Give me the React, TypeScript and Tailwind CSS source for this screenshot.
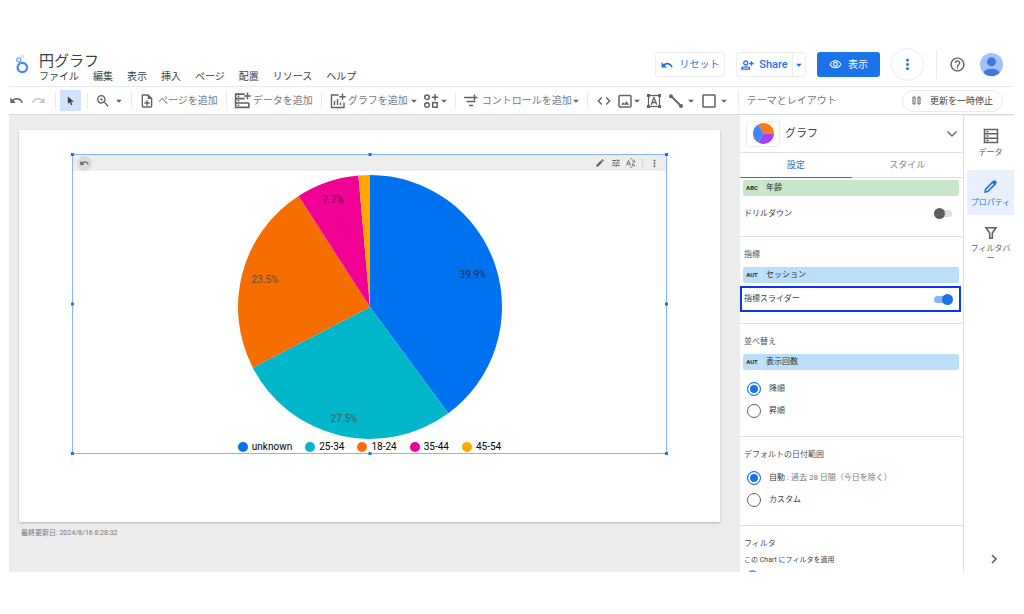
import type { ReactNode } from "react";
import {
  MdArrowDropDown,
  MdCode,
  MdEdit,
  MdHelpOutline,
  MdMoreVert,
  MdOutlineNoteAdd,
  MdOutlineVisibility,
  MdRedo,
  MdTune,
  MdUndo,
  MdZoomIn,
} from "react-icons/md";

const menus = ["ファイル", "編集", "表示", "挿入", "ページ", "配置", "リソース", "ヘルプ"];

const slices = [
  { label: "unknown", value: 39.9, fill: "#0072f0", ink: "#1f2a3c", dot: "bg-[#0072f0]", x: 473, y: 274 },
  { label: "25-34", value: 27.5, fill: "#00b6cb", ink: "#46585e", dot: "bg-[#00b6cb]", x: 344, y: 418 },
  { label: "18-24", value: 23.5, fill: "#f66d00", ink: "#5c4a40", dot: "bg-[#f66d00]", x: 265, y: 279 },
  { label: "35-44", value: 7.7, fill: "#f10096", ink: "#4a1438", dot: "bg-[#f10096]", x: 333, y: 199 },
  { label: "45-54", value: 1.4, fill: "#ffa800", ink: "", dot: "bg-[#ffa800]", x: 0, y: 0 },
];

const CX = 370;
const CY = 307;
const R = 132;

function point(percent: number) {
  const a = (percent / 100) * Math.PI * 2;
  return `${(CX + R * Math.sin(a)).toFixed(2)} ${(CY - R * Math.cos(a)).toFixed(2)}`;
}

function PieChart() {
  let sum = 0;
  return (
    <svg viewBox="236 175 268 265" className="h-[265px] w-[268px]" role="img" aria-label="円グラフ">
      {slices.map((s) => {
        const start = sum;
        sum += s.value;
        return (
          <path
            key={s.label}
            d={`M${CX} ${CY}L${point(start)}A${R} ${R} 0 0 1 ${point(sum)}Z`}
            fill={s.fill}
          />
        );
      })}
      {slices
        .filter((s) => s.ink)
        .map((s) => (
          <text
            key={s.label}
            x={s.x}
            y={s.y + 4}
            textAnchor="middle"
            fill={s.ink}
            className="font-[Roboto] text-[10px]"
          >
            {s.value}%
          </text>
        ))}
    </svg>
  );
}

function Caret({ className = "" }: { className?: string }) {
  return <MdArrowDropDown aria-hidden className={`size-[14px] shrink-0 ${className}`} />;
}

function Sep({ className }: { className: string }) {
  return <span className={`h-[17px] w-px shrink-0 bg-[#e8eaed] ${className}`} />;
}

function Svg({ children, className = "size-4" }: { children: ReactNode; className?: string }) {
  return (
    <svg
      viewBox="0 0 16 16"
      fill="none"
      stroke="currentColor"
      strokeWidth="1.5"
      aria-hidden
      className={`shrink-0 ${className}`}
    >
      {children}
    </svg>
  );
}

function ReplyIcon({ className }: { className: string }) {
  return (
    <svg viewBox="0 0 12 8" aria-hidden className={className}>
      <path d="M0.5 1v5.5H6L3.8 4.4C5.8 2.8 9 3.2 10.4 6.6l1.3-.5C10 1.500 5.700.6 2.700 3.200z" fill="currentColor" />
    </svg>
  );
}

function Toolbar() {
  return (
    <div className="flex h-7 shrink-0 items-center whitespace-nowrap border-b border-[#d5d7da] text-[10px] leading-4 text-[#75797e] shadow-[0_1px_1px_rgba(0,0,0,0.06)]">
      <button aria-label="元に戻す" className="text-[#5f6368]"><MdUndo className="size-[15px]" /></button>
      <button aria-label="やり直す" className="ml-[7px] text-[#c4c6c9]"><MdRedo className="size-[15px]" /></button>
      <Sep className="ml-[9px] mr-1" />
      <button aria-label="選択" className="flex h-[21px] w-[21px] items-center justify-center bg-[#d2e3fc] text-[#3c4043]">
        <svg viewBox="0 0 8 11" className="h-[10px] w-2" aria-hidden>
          <path d="M0.500 0.500v8l2-1.700 1.500 3.400 1.500-.7L4 6.200h3.300z" fill="currentColor" />
        </svg>
      </button>
      <Sep className="ml-[6px] mr-[7px]" />
      <button aria-label="ズーム" className="flex items-center text-[#5f6368]">
        <MdZoomIn className="size-4" />
        <Caret className="ml-px" />
      </button>
      <Sep className="ml-[5px] mr-[7px]" />
      <button className="flex items-center gap-[3px]">
        <MdOutlineNoteAdd className="size-4 text-[#5f6368]" />
        ページを追加
      </button>
      <Sep className="ml-2 mr-[7px]" />
      <button className="flex items-center gap-[2px]">
        <Svg className="size-[17px] text-[#5f6368]">
          <path d="M10 2H1.500v12.500H14V10.200M1.500 6.200H10M1.500 10.300H14M12.700.500v6.400M9.500 3.700h6.400M3.500 4.100h1.500M3.500 8.300h1.500M3.500 12.400h1.500" />
        </Svg>
        データを追加
      </button>
      <Sep className="ml-[8px] mr-2" />
      <button className="flex items-center text-[#75797e]">
        <Svg className="mr-[2px] size-4 text-[#5f6368]">
          <path d="M8.500 2H1.500v12.500H14V9.500M12.500.500v6.400M9.300 3.700h6.400M4.500 12V8M7.500 12V6M10.500 12V9.500" strokeWidth="1.400" />
        </Svg>
        グラフを追加
        <Caret className="-ml-px text-[#5f6368]" />
      </button>
      <button aria-label="コミュニティ ビジュアリゼーション" className="ml-[2px] flex items-center text-[#5f6368]">
        <Svg>
          <circle cx="4" cy="4.200" r="2.300" />
          <circle cx="4" cy="12" r="2.300" />
          <rect x="9.700" y="9.700" width="4.500" height="4.500" />
          <path d="M12 1v6.400M8.800 4.200h6.400" />
        </Svg>
        <Caret className="-ml-[2px]" />
      </button>
      <Sep className="ml-[4px] mr-[7px]" />
      <button className="flex items-center">
        <Svg className="mr-[3px] size-4 text-[#5f6368]">
          <path d="M1 4.500h13.500M3.500 8.500h9M6 12.500h4M11.500 1.500v6" />
        </Svg>
        コントロールを追加
        <Caret className="-ml-[3px] text-[#5f6368]" />
      </button>
      <Sep className="ml-[4px] mr-[8px]" />
      <div className="flex items-center text-[#5f6368]">
        <button aria-label="URL の埋め込み"><MdCode className="size-4" /></button>
        <button aria-label="画像" className="ml-[5px] flex items-center">
          <Svg>
            <rect x="2" y="2.500" width="12" height="11.500" rx="1" />
            <path d="M4 11.800l2-2.600 1.500 1.500 2-2.500 2.600 3.600z" fill="currentColor" stroke="none" />
          </Svg>
          <Caret className="-ml-[3px]" />
        </button>
        <button aria-label="テキスト" className="ml-[2px]">
          <Svg className="size-4">
            <rect x="2.500" y="2.500" width="11" height="11" strokeWidth="1.200" />
            <path d="M1 1h3v3H1zM12 1h3v3h-3zM1 12h3v3H1zM12 12h3v3h-3z" fill="currentColor" stroke="none" />
            <path d="M5.200 11.800L8 4.500l2.800 7.300M6.200 9.500h3.600" strokeWidth="1.300" />
          </Svg>
        </button>
        <button aria-label="線" className="ml-[6px] flex items-center">
          <Svg>
            <path d="M3 3l10 10" strokeWidth="1.800" />
            <circle cx="3" cy="3.300" r="2" fill="currentColor" stroke="none" />
            <circle cx="13" cy="13" r="2" fill="currentColor" stroke="none" />
          </Svg>
          <Caret />
        </button>
        <button aria-label="図形" className="ml-[3px] flex items-center">
          <Svg><rect x="2" y="2" width="12" height="12" rx="0.500" /></Svg>
          <Caret />
        </button>
      </div>
      <Sep className="ml-[7px] mr-2" />
      <button>テーマとレイアウト</button>
      <button className="ml-auto mr-[11px] flex h-[22px] items-center gap-[9px] rounded-full border border-[#e8eaed] px-[9px] text-[#3c4043]">
        <svg viewBox="0 0 9 9" className="size-[9px]" fill="none" stroke="#5f6368" aria-hidden>
          <path d="M1 1h2v7H1zM6 1h2v7H6z" />
        </svg>
        <span className="text-[9px]">更新を一時停止</span>
      </button>
    </div>
  );
}

function Header() {
  return (
    <header className="flex h-[41px] shrink-0 items-start border-b border-[#e8eaed]">
      <svg viewBox="0 0 14 20" className="ml-[6px] mt-2 h-5 w-[14px]" fill="none" aria-hidden>
        <circle cx="7.300" cy="13.500" r="4.700" stroke="#4285f4" strokeWidth="2.200" />
        <circle cx="3.800" cy="5.800" r="2" stroke="#6ba0f7" strokeWidth="1.300" />
        <circle cx="7.300" cy="2.300" r="1.200" stroke="#b7d0fb" strokeWidth="1" />
      </svg>
      <div className="ml-[10px] flex flex-col pt-[6px]">
        <h1 className="text-[15px] leading-[18px] text-[#3c4043]">円グラフ</h1>
        <nav className="flex gap-[14px] text-[10px] leading-[14px] text-[#3c4043]">
          {menus.map((m) => (
            <button key={m} className="whitespace-nowrap">{m}</button>
          ))}
        </nav>
      </div>
      <div className="ml-auto flex items-center pt-[2px] text-[10px] leading-4 text-[#1a73e8]">
        <button className="flex h-[25px] w-[70px] items-center justify-center gap-[7px] rounded-[3px] border border-[#eceef0]">
          <ReplyIcon className="h-2 w-3" />
          リセット
        </button>
        <div className="ml-[11px] flex h-[25px] items-stretch rounded-[3px] border border-[#eceef0]">
          <button className="flex w-[55px] items-center justify-center gap-[5px] font-[Roboto] font-medium text-[11px]">
            <svg viewBox="0 0 13 12" className="h-3 w-[13px]" fill="none" stroke="currentColor" strokeWidth="1.300" aria-hidden>
              <circle cx="4.700" cy="4" r="2" />
              <path d="M.8 10.200V9.200C.8 7.500 8.600 7.500 8.600 9.200v1zM10.500 2.200v4.600M8.200 4.500h4.600" />
            </svg>
            Share
          </button>
          <button aria-label="共有オプション" className="flex w-[13px] items-center justify-center border-l border-[#eceef0]">
            <Caret />
          </button>
        </div>
        <button className="ml-[11px] flex h-[25px] w-[63px] items-center justify-center gap-[6px] rounded-[3px] bg-[#1a73e8] text-white">
          <MdOutlineVisibility className="size-[13px]" />
          表示
        </button>
        <button aria-label="その他" className="ml-[11px] flex size-[33px] items-center justify-center rounded-full border border-[#e8eaed]">
          <MdMoreVert className="size-[17px]" />
        </button>
        <span className="ml-3 h-[29px] w-px bg-[#e8eaed]" />
        <button aria-label="ヘルプを表示" className="ml-3 text-[#5f6368]"><MdHelpOutline className="size-[17px]" /></button>
        <button aria-label="アカウント" className="ml-[14px] mr-[11px]">
          <svg viewBox="0 0 24 24" className="size-[23px]">
            <clipPath id="avatar"><circle cx="12" cy="12" r="12" /></clipPath>
            <g clipPath="url(#avatar)">
              <rect width="24" height="24" fill="#a0c3ff" />
              <circle cx="12" cy="9.200" r="4.700" fill="#4374e0" />
              <path d="M3.500 21C5 15 19 15 20.500 21L17 25H7z" fill="#4374e0" />
            </g>
          </svg>
        </button>
      </div>
    </header>
  );
}

const handles = [
  "-left-[2px] -top-[2px]",
  "left-1/2 -top-[2px] -translate-x-1/2",
  "-right-[2px] -top-[2px]",
  "-left-[2px] top-1/2 -translate-y-1/2",
  "-right-[2px] top-1/2 -translate-y-1/2",
  "-left-[2px] -bottom-[2px]",
  "left-1/2 -bottom-[2px] -translate-x-1/2",
  "-right-[2px] -bottom-[2px]",
];

function Canvas() {
  return (
    <main className="min-w-0 flex-1 bg-[#ececec] pl-[10px] pr-5 pt-[15px]">
      <div className="bg-white px-[53px] pb-[68px] pt-6 shadow-[0_1px_2px_rgba(0,0,0,0.25)]">
        <section className="relative border border-[#8ab4f8]">
          <div className="flex h-4 items-center bg-[#ededed] pl-1 text-[#5f6368]">
            <button aria-label="グラフをリセット" className="flex size-[15px] items-center justify-center rounded-full bg-[#dcdcdc]">
              <ReplyIcon className="h-[6px] w-[9px]" />
            </button>
            <button aria-label="編集" className="ml-auto"><MdEdit className="size-[10px]" /></button>
            <button aria-label="指標の調整" className="ml-[6px]"><MdTune className="size-[10px]" /></button>
            <button aria-label="並べ替え" className="ml-[5px]">
              <svg viewBox="0 0 10 10" className="size-[10px]" fill="none" stroke="currentColor" strokeWidth="0.900" aria-hidden>
                <path d="M.5 7.500L2.500 2.500l2 5M1.200 6h2.600M6 3h3L6 7.300h3.300M4.200 1.500L5.200.500l1 1M4.200 8.700l1 1 1-1" />
              </svg>
            </button>
            <span className="ml-[6px] h-[9px] w-px bg-[#d5d5d5]" />
            <button aria-label="その他のオプション" className="ml-[6px] mr-[6px]"><MdMoreVert className="size-[11px]" /></button>
          </div>
          <div className="flex flex-col items-center pt-1">
            <PieChart />
            <ul className="flex h-[13px] items-end gap-[13px] whitespace-nowrap font-[Roboto] text-[10px] leading-3 text-black">
              {slices.map((s) => (
                <li key={s.label} className="flex items-center gap-1">
                  <span className={`size-[10px] rounded-full ${s.dot}`} />
                  {s.label}
                </li>
              ))}
            </ul>
          </div>
          {handles.map((h) => (
            <span key={h} className={`absolute size-[3px] bg-[#1a73e8] ${h}`} />
          ))}
        </section>
      </div>
      <p className="mt-[6px] pl-[2px] text-[7px] leading-[10px] text-[#757575]">最終更新日: 2024/8/16 8:28:32</p>
    </main>
  );
}

function Chip({ type, name, tone }: { type: string; name: string; tone: "green" | "blue" }) {
  const bg = tone === "green" ? "bg-[#c8e6c9]" : "bg-[#bbdefb]";
  const line = tone === "green" ? "border-[#d9eeda]" : "border-[#d0e8fc]";
  return (
    <button className={`ml-[3px] mr-1 flex h-4 items-center rounded-[2px] text-left text-[#263238] ${bg}`}>
      <span className={`flex h-full w-[19px] items-center justify-center border-r text-[6px] font-bold leading-none ${line}`}>{type}</span>
      <span className="pl-1 text-[8px] leading-3">{name}</span>
    </button>
  );
}

function SwitchRow({ id, label, on, className }: { id: string; label: string; on?: boolean; className: string }) {
  return (
    <div className={`flex items-center justify-between text-[8px] leading-3 text-[#3c4043] ${className}`}>
      <label htmlFor={id}>{label}</label>
      <input
        id={id}
        type="checkbox"
        role="switch"
        defaultChecked={on}
        className="relative h-[7px] w-[18px] appearance-none rounded-full bg-[#dedede] before:absolute before:-top-[2px] before:left-0 before:size-[11px] before:rounded-full before:bg-[#5f5f5f] checked:bg-[#8ab4f8] checked:before:left-[8px] checked:before:bg-[#1a73e8]"
      />
    </div>
  );
}

function Radio({ name, on, children }: { name: string; on?: boolean; children: ReactNode }) {
  return (
    <label className="flex h-[22px] items-center gap-2 pl-[7px] text-[8px] leading-3 text-[#3c4043]">
      <input
        type="radio"
        name={name}
        defaultChecked={on}
        className="size-[14px] shrink-0 appearance-none rounded-full border border-[#5f6368] checked:border-[#1a73e8] checked:bg-[#1a73e8] checked:shadow-[inset_0_0_0_2px_white]"
      />
      <span>{children}</span>
    </label>
  );
}

const sectionClass = "flex flex-col border-t border-[#e0e0e0] pt-3";
const titleClass = "pl-1 text-[8px] leading-3 text-[#4a4e52]";

function Panel() {
  return (
    <aside className="flex w-[224px] shrink-0 flex-col overflow-hidden border-r border-[#e0e0e0] bg-white">
      <div className="flex h-[38px] shrink-0 items-center border-b border-[#e0e0e0] pl-[6px] pr-[5px]">
        <span className="flex h-[26px] w-[34px] items-center justify-center rounded-[2px] border border-[#eceef0]">
          <svg viewBox="0 0 20 20" className="size-[21px]" aria-hidden>
            <path d="M10 10L5 1.340A10 10 0 0 1 20 10z" fill="#fa7b17" />
            <path d="M10 10H20A10 10 0 0 1 5 18.660z" fill="#a142f4" />
            <path d="M10 10L5 18.660A10 10 0 0 1 5 1.340z" fill="#4285f4" />
          </svg>
        </span>
        <h2 className="pl-[5px] text-[11px] leading-4 text-[#3c4043]">グラフ</h2>
        <button aria-label="グラフの種類" className="ml-auto text-[#5f6368]">
          <svg viewBox="0 0 12 8" className="h-2 w-3" fill="none" stroke="currentColor" strokeWidth="1.300" aria-hidden>
            <path d="M1.500 1.500L6 6l4.500-4.500" />
          </svg>
        </button>
      </div>
      <div role="tablist" className="flex h-[25px] shrink-0 text-[9px] leading-4">
        <button role="tab" aria-selected="true" className="flex-1 border-b border-[#3367d6] text-[#3367d6]">設定</button>
        <button role="tab" aria-selected="false" className="flex-1 border-b border-[#e0e0e0] text-[#80868b]">スタイル</button>
      </div>
      <div className="min-h-0 flex-1 overflow-hidden">
        <section className="flex flex-col pb-[5px] pt-[2px]">
          <Chip type="ABC" name="年齢" tone="green" />
          <SwitchRow id="drilldown" label="ドリルダウン" className="h-[35px] pl-1 pr-[11px]" />
        </section>
        <section className={`${sectionClass} pb-[11px]`}>
          <h3 className={titleClass}>指標</h3>
          <div className="mt-[6px] flex flex-col">
            <Chip type="AUT" name="セッション" tone="blue" />
          </div>
          <SwitchRow
            id="metric-slider"
            label="指標スライダー"
            on
            className="mr-[2px] mt-[3px] h-[26px] border-2 border-[#0a36f0] pl-[2px] pr-[7px]"
          />
        </section>
        <section className={`${sectionClass} pb-[14px]`}>
          <h3 className={titleClass}>並べ替え</h3>
          <div className="mb-2 mt-[6px] flex flex-col">
            <Chip type="AUT" name="表示回数" tone="blue" />
          </div>
          <Radio name="sort" on>降順</Radio>
          <Radio name="sort">昇順</Radio>
        </section>
        <section className={`${sectionClass} pb-[14px]`}>
          <h3 className={`${titleClass} mb-[6px]`}>デフォルトの日付範囲</h3>
          <Radio name="range" on>
            自動 <span className="text-[#75797e]">: 過去 28 日間（今日を除く）</span>
          </Radio>
          <Radio name="range">カスタム</Radio>
        </section>
        <section className={sectionClass}>
          <h3 className={titleClass}>フィルタ</h3>
          <p className="mt-1 pl-1 text-[7px] leading-3 text-[#3c4043]">この Chart にフィルタを適用</p>
          <input
            type="checkbox"
            aria-label="フィルタを適用"
            defaultChecked
            className="ml-[7px] mt-1 size-[11px] appearance-none rounded-full bg-[#669df6]"
          />
        </section>
      </div>
    </aside>
  );
}

function Rail() {
  const item = "flex w-full flex-col items-center text-[8px] leading-[10px]";
  return (
    <nav className="flex w-[50px] shrink-0 flex-col pl-[3px] text-[#5f6368]">
      <button className={`${item} h-[55px] pt-[13px]`}>
        <Svg className="mb-1 size-4">
          <path d="M1.500 1.500h13v13h-13zM1.500 5.800h13M1.500 10.200h13M3.500 3.700h2M3.500 8h2M3.500 12.400h2" strokeWidth="1.600" />
        </Svg>
        データ
      </button>
      <button className={`${item} h-[45px] rounded-l-[3px] bg-[#e8f0fe] pt-[9px] text-[#1a73e8]`}>
        <Svg className="mb-1 size-[15px]">
          <path d="M2.200 13.800l.5-2.800L10.500 3.200l2.300 2.300L5 13.300z" strokeWidth="1.700" />
          <path d="M9.600 3.600l1.900-1.900c.6-.6 1.200-.6 1.800 0l1 1c.6.6.6 1.200 0 1.800l-1.900 1.900z" fill="currentColor" stroke="none" />
        </Svg>
        プロパティ
      </button>
      <button className={`${item} pt-[11px]`}>
        <Svg className="mb-1 size-[14px]">
          <path d="M2.300 2h11.400L9.500 8v6h-3V8z" strokeWidth="1.800" />
        </Svg>
        <span className="w-[40px]">フィルタバー</span>
      </button>
      <button aria-label="パネルを閉じる" className="mb-[7px] ml-[21px] mt-auto size-3">
        <svg viewBox="0 0 12 12" className="size-3" fill="none" stroke="currentColor" strokeWidth="1.700" aria-hidden>
          <path d="M4 2l4 4-4 4" />
        </svg>
      </button>
    </nav>
  );
}

export default function App() {
  return (
    <div className="flex h-screen flex-col bg-white pb-[42px] pl-[9px] pr-[10px] pt-[46px] font-['Roboto','Noto_Sans_CJK_JP',sans-serif]">
      <Header />
      <Toolbar />
      <div className="flex min-h-0 flex-1">
        <Canvas />
        <Panel />
        <Rail />
      </div>
    </div>
  );
}
